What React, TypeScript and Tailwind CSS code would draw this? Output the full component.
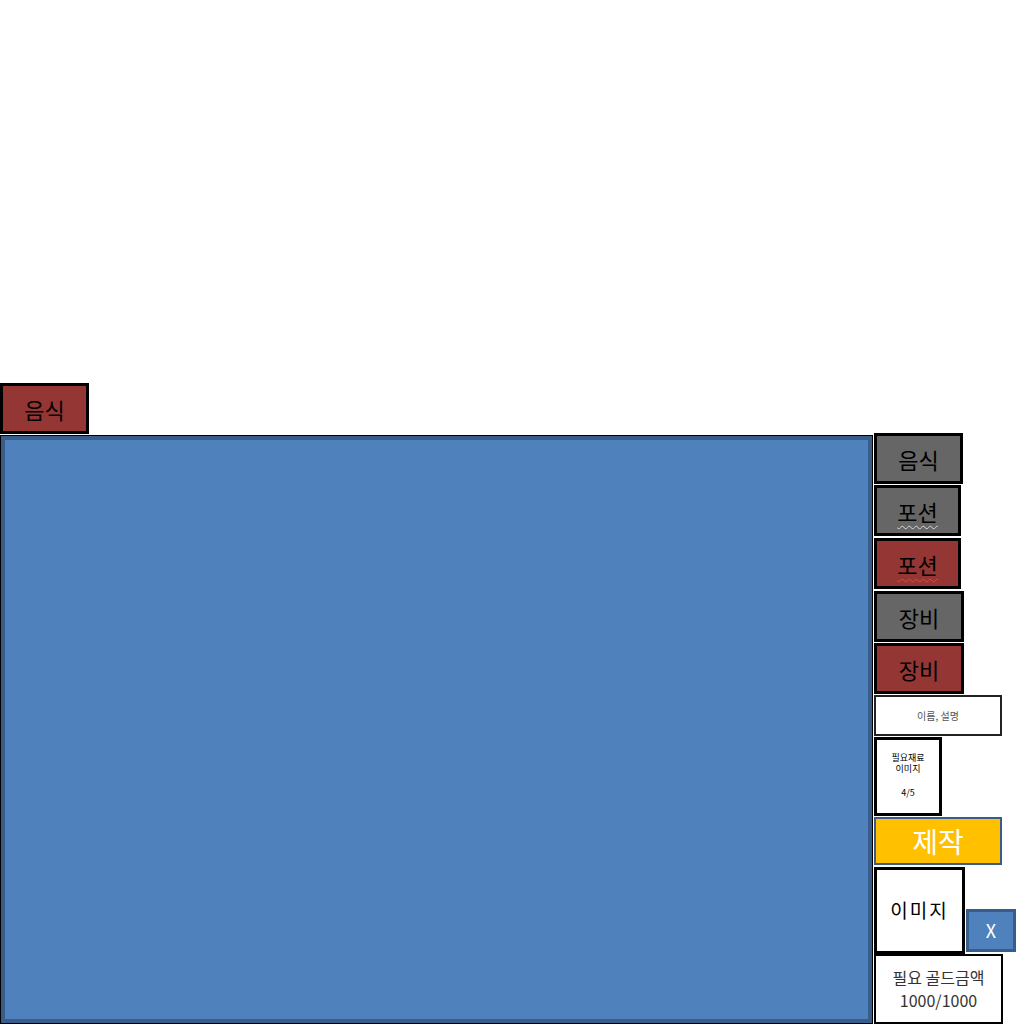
import React from 'react';

const font = { fontFamily: '"Noto Sans CJK KR", "Noto Sans", sans-serif' };

type TabProps = {
  label: string;
  color: 'gray' | 'red';
  width: string;
  squiggle?: string;
  className?: string;
};

// category tab used both on the left and in the side bar
function Tab({ label, color, width, squiggle, className = '' }: TabProps) {
  const bg = color === 'red' ? 'bg-[#943634]' : 'bg-[#666666]';
  return (
    <div
      className={`${width} h-[51px] ${bg} border-[3px] border-black flex items-center justify-center text-[22px] leading-none text-black ${className}`}
    >
      <span
        className={
          squiggle
            ? `underline decoration-wavy decoration-1 underline-offset-[4px] ${squiggle}`
            : ''
        }
      >
        {label}
      </span>
    </div>
  );
}

export default function App() {
  return (
    <div className="w-[1024px] h-[1024px] bg-white overflow-hidden flex" style={font}>
      {/* left side: category tab + item grid panel */}
      <div className="w-[873px] flex flex-col pt-[383px]">
        <Tab label="음식" color="red" width="w-[89px]" />
        <div className="mt-[1px] flex-1 border border-black">
          <div className="h-full border-[4px] border-[#385d8a] bg-[#4f81bd]" />
        </div>
      </div>

      {/* right side bar */}
      <div className="ml-[1px] flex-1 flex flex-col pt-[433px]">
        <Tab label="음식" color="gray" width="w-[89px]" />
        <Tab
          label="포션"
          color="gray"
          width="w-[87px]"
          squiggle="decoration-[#d8d8d8]"
          className="mt-[1px]"
        />
        <Tab
          label="포션"
          color="red"
          width="w-[87px]"
          squiggle="decoration-[#ff3b3b]"
          className="mt-[2px]"
        />
        <Tab label="장비" color="gray" width="w-[90px]" className="mt-[2px]" />
        <Tab label="장비" color="red" width="w-[90px]" className="mt-[1px]" />

        <div className="mt-[1px] w-[128px] h-[41px] border-2 border-[#222] bg-white flex items-center justify-center text-[10px] text-[#555]">
          이름, 설명
        </div>

        <div className="mt-[1px] w-[68px] h-[79px] border-[3px] border-black bg-white flex flex-col items-center pt-[12px] text-[9px] leading-[11px] text-black">
          <span>필요재료</span>
          <span>이미지</span>
          <span className="mt-[13px]">4/5</span>
        </div>

        <div className="mt-[1px] w-[128px] h-[48px] border-2 border-[#385d8a] bg-[#ffc000] flex items-center justify-center text-[28px] leading-none text-white">
          제작
        </div>

        <div className="mt-[2px] flex items-end">
          <div className="w-[91px] h-[87px] border-[3px] border-black bg-white flex items-center justify-center text-[19px] tracking-[2px] text-black">
            이미지
          </div>
          <div className="ml-[1px] mb-[2px] w-[50px] h-[43px] border-[3px] border-[#385d8a] bg-[#4f81bd] flex items-center justify-center text-[18px] text-white">
            X
          </div>
        </div>

        <div className="w-[129px] flex-1 border-2 border-black bg-white flex flex-col items-center justify-center text-[16px] leading-[23px] text-[#333]">
          <span>필요 골드금액</span>
          <span>1000/1000</span>
        </div>
      </div>
    </div>
  );
}
